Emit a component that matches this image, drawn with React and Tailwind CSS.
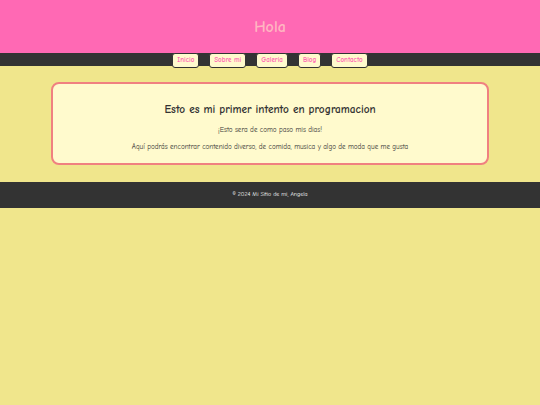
import React from 'react';

const links = ['Inicio', 'Sobre mi', 'Galeria', 'Blog', 'Contacto'];

function App() {
  return (
    <div
      className="min-h-[405px] bg-[#f0e68c] text-[#333]"
      style={{ fontFamily: '"Comic Sans MS", "Comic Neue", cursive, sans-serif' }}
    >
      <header className="h-[53px] bg-[#ff69b4] flex items-center justify-center">
        <h1 className="text-[16px] font-bold text-[#ffb6c1] leading-none">Hola</h1>
      </header>

      <nav className="h-[13px] bg-[#333] flex justify-center items-start gap-[10px]">
        {links.map((link) => (
          <a
            key={link}
            href="#"
            className="relative z-10 h-[15px] px-[4px] flex items-center bg-[#fffacd] border border-[#333] rounded-[3px] text-[7px] font-bold text-[#ff69b4] leading-none"
          >
            {link}
          </a>
        ))}
      </nav>

      <main className="px-[51px] pt-[16px] pb-[17px]">
        <section className="bg-[#fffacd] border-2 border-[#f08080] rounded-[8px] h-[83px] flex flex-col items-center pt-[20px]">
          <h2 className="text-[11.3px] font-bold leading-none">Esto es mi primer intento en programacion</h2>
          <p className="text-[7.1px] leading-none mt-[12px]">¡Esto sera de como paso mis dias!</p>
          <p className="text-[7.1px] leading-none mt-[10px]">
            Aquí podrás encontrar contenido diverso, de comida, musica y algo de moda que me gusta
          </p>
        </section>
      </main>

      <footer className="h-[26px] bg-[#333] text-white flex items-center justify-center">
        <p className="text-[5.9px] leading-none">© 2024 Mi Sitio de mi, Angela</p>
      </footer>
    </div>
  );
}

export default App;
